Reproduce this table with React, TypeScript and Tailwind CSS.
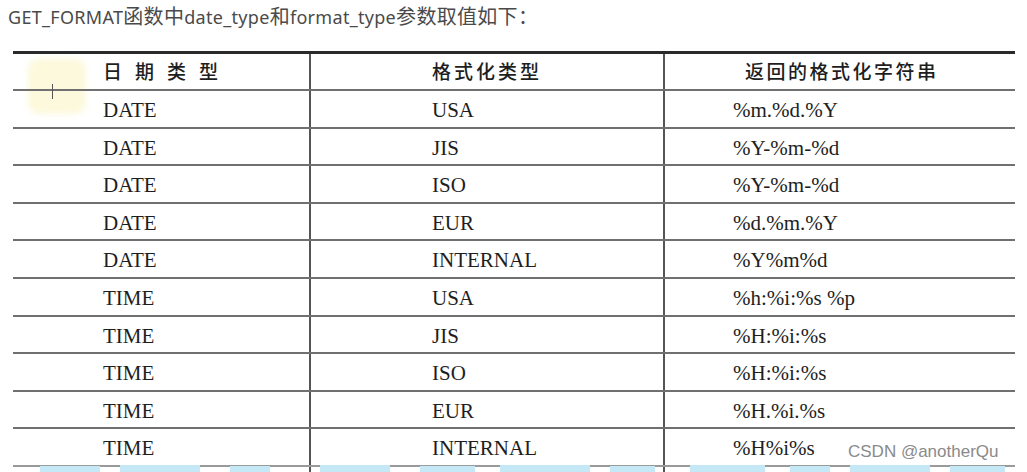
import React from 'react'

const rows: [string, string, string][] = [
  ['DATE', 'USA', '%m.%d.%Y'],
  ['DATE', 'JIS', '%Y-%m-%d'],
  ['DATE', 'ISO', '%Y-%m-%d'],
  ['DATE', 'EUR', '%d.%m.%Y'],
  ['DATE', 'INTERNAL', '%Y%m%d'],
  ['TIME', 'USA', '%h:%i:%s %p'],
  ['TIME', 'JIS', '%H:%i:%s'],
  ['TIME', 'ISO', '%H:%i:%s'],
  ['TIME', 'EUR', '%H.%i.%s'],
  ['TIME', 'INTERNAL', '%H%i%s'],
]

const serif = "font-['Liberation_Serif','Times_New_Roman',serif]"
const cjk = "font-['Noto_Sans_CJK_SC',sans-serif]"

const Zh = ({ children }: { children: React.ReactNode }) => (
  <span className="text-[20px] font-['Noto_Sans_CJK_SC',sans-serif]">{children}</span>
)

export default function App() {
  return (
    <div className="relative w-[1027px] h-[472px] overflow-hidden bg-white">
      {/* 左上角淡黄色光晕 */}
      <div className="absolute left-[28px] top-[58px] w-[58px] h-[56px] rounded-[12px] bg-[#fcf9dc] blur-[3px]" />

      <p className="pl-[8px] pt-[3px] h-[51px] text-[18px] leading-[26px] tracking-[0.3px] text-[#4a4a4a] font-['Noto_Sans','Noto_Sans_CJK_SC',sans-serif]">
        GET_FORMAT<Zh>函数中</Zh>date_type<Zh>和</Zh>format_type<Zh>参数取值如下：</Zh>
      </p>

      <div className="relative ml-[13px] w-[1002px] border-t-[3px] border-[#2a2a2a]">
        <div className="grid grid-cols-[296px_354px_352px] h-[37px] border-b-2 border-[#707070] text-[19px] text-[#1e1e1e] items-center">
          <div className={`${cjk} pl-[90px] tracking-[13px] font-medium`}>日期类型</div>
          <div className={`${cjk} pl-[121px] tracking-[3px] font-medium h-full flex items-center border-l-2 border-[#555]`}>格式化类型</div>
          <div className={`${cjk} pl-[80px] tracking-[2.5px] font-medium h-full flex items-center border-l-2 border-[#555]`}>返回的格式化字符串</div>
        </div>
        {rows.map((r, i) => (
          <div
            key={i}
            className={`grid grid-cols-[296px_354px_352px] h-[37.6px] border-b-2 ${i === rows.length - 1 ? 'border-[#9a9a9a]' : 'border-[#707070]'} text-[21px] text-[#1e1e1e] ${serif}`}
          >
            <div className="pl-[90px] pt-[4px] flex items-center">{r[0]}</div>
            <div className="pl-[121px] pt-[4px] flex items-center border-l-2 border-[#555]">{r[1]}</div>
            <div className="pl-[68px] pt-[4px] flex items-center border-l-2 border-[#555]">{r[2]}</div>
          </div>
        ))}
        <div className="grid grid-cols-[296px_354px_352px] h-[10px]">
          <div />
          <div className="border-l-2 border-[#555]" />
          <div className="border-l-2 border-[#555]" />
        </div>

        {/* 光标十字 */}
        <div className="absolute left-[39px] top-[30px] w-[1px] h-[15px] bg-[#555]" />

        <span className="absolute left-[835px] top-[385px] text-[17px] text-[#8a8a8a] font-['Liberation_Sans',Arial,sans-serif]">
          CSDN @anotherQu
        </span>
      </div>

      {/* 底部淡蓝色水印 */}
      <svg className="absolute left-0 top-[465px]" width="1027" height="7" viewBox="0 0 1027 7">
        <g fill="#c4e8f6">
          <rect x="40" y="1" width="60" height="6" />
          <rect x="120" y="0" width="80" height="7" />
          <rect x="230" y="1" width="40" height="6" />
          <rect x="320" y="0" width="70" height="7" />
          <rect x="420" y="1" width="55" height="6" />
          <rect x="500" y="0" width="90" height="7" />
          <rect x="610" y="1" width="45" height="6" />
          <rect x="690" y="0" width="75" height="7" />
          <rect x="790" y="1" width="40" height="6" />
          <rect x="850" y="0" width="80" height="7" />
          <rect x="950" y="1" width="55" height="6" />
        </g>
      </svg>
    </div>
  )
}
